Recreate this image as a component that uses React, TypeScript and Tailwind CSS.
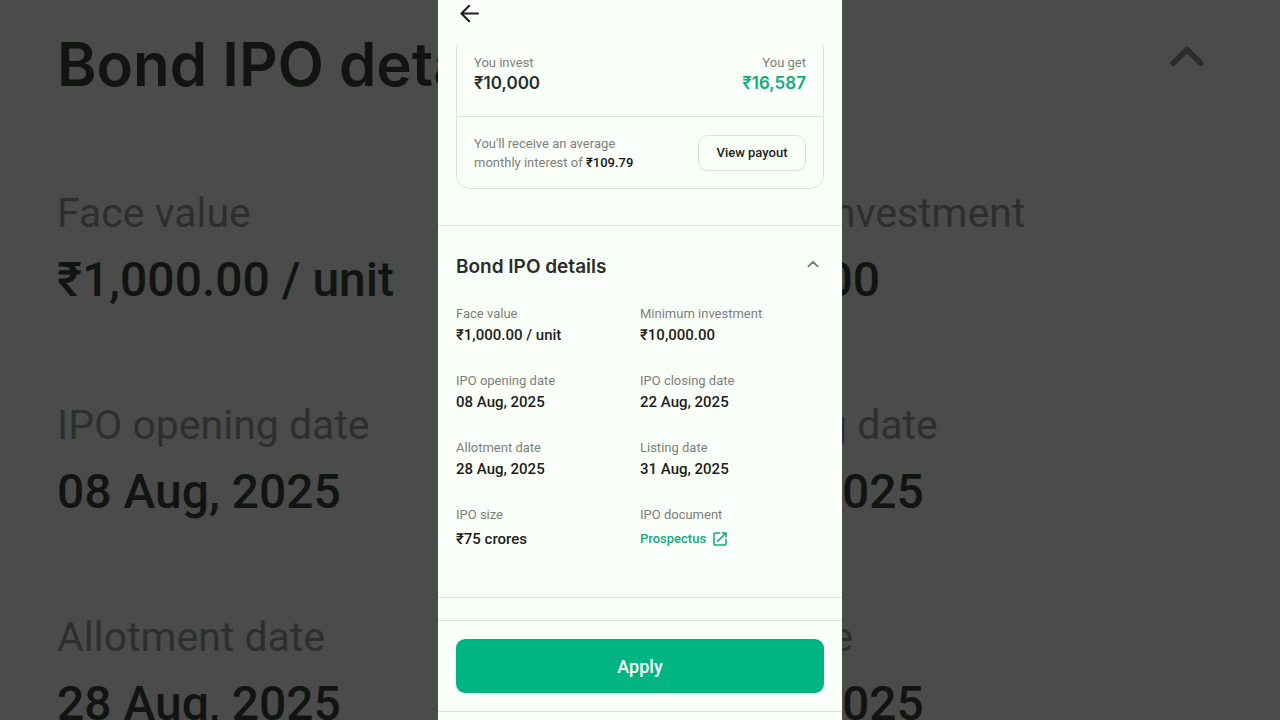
import { useState } from 'react';
import type { ReactNode } from 'react';
import { MdOpenInNew } from 'react-icons/md';

type Detail = {
  label: string;
  value: string;
  href?: string;
};

const DETAILS: Detail[] = [
  { label: 'Face value', value: '₹1,000.00 / unit' },
  { label: 'Minimum investment', value: '₹10,000.00' },
  { label: 'IPO opening date', value: '08 Aug, 2025' },
  { label: 'IPO closing date', value: '22 Aug, 2025' },
  { label: 'Allotment date', value: '28 Aug, 2025' },
  { label: 'Listing date', value: '31 Aug, 2025' },
  { label: 'IPO size', value: '₹75 crores' },
  { label: 'IPO document', value: 'Prospectus', href: '#prospectus' },
];

function ArrowLeft() {
  return (
    <svg viewBox="0 0 24 24" className="size-6" fill="none" stroke="currentColor" strokeWidth="2">
      <path d="M20 12.5H3.6M11.2 4.7 3.4 12.5l7.8 7.8" strokeLinecap="round" strokeLinejoin="round" />
    </svg>
  );
}

function ChevronUp({ className }: { className: string }) {
  return (
    <svg viewBox="0 0 12 8" className={className} fill="none" stroke="currentColor" strokeWidth="1.9">
      <path d="M1.4 6.4 6 1.8l4.6 4.6" strokeLinecap="round" strokeLinejoin="round" />
    </svg>
  );
}

// Dimmed, enlarged copy of the details section behind the phone column.
function Backdrop() {
  return (
    <div aria-hidden="true" className="absolute inset-0 overflow-hidden px-[57px] pt-6">
      <div className="mb-[79px] flex items-start justify-between pr-[18px] text-[#121412]">
        <p className="font-['Inter'] text-[60px] leading-[80px] font-semibold whitespace-nowrap">Bond IPO details</p>
        <ChevronUp className="mt-5 w-9 text-[#2b2d2b]" />
      </div>
      <div className="grid grid-cols-2 gap-y-[79px]">
        {DETAILS.slice(0, 6).map((d) => (
          <div key={d.label} className="whitespace-nowrap">
            <p className="text-[41px] leading-[60px] text-[#2d2f2d]">{d.label}</p>
            <p className="text-[48px] leading-[73px] font-medium text-[#121412]">{d.value}</p>
          </div>
        ))}
      </div>
    </div>
  );
}

function Amount({ label, children }: { label: string; children: ReactNode }) {
  return (
    <div>
      <p className="text-[13px] leading-5 text-[#7b7f7b]">{label}</p>
      {children}
    </div>
  );
}

function ReturnsCard() {
  return (
    <div className="mx-[18px] rounded-b-[14px] border-x border-b border-[#dfe3de]">
      <div className="flex justify-between px-[17px] pt-2 pb-[23px]">
        <Amount label="You invest">
          <p className="font-['Inter'] text-[17px] leading-5 font-semibold text-[#2a2d2a]">₹10,000</p>
        </Amount>
        <div className="text-right">
          <Amount label="You get">
            <p className="font-['Inter'] text-[17px] leading-5 font-semibold text-[#12aa7e]">₹16,587</p>
          </Amount>
        </div>
      </div>
      <div className="flex items-center justify-between border-t border-[#dfe3de] px-[17px] pt-[17px] pb-4">
        <p className="text-[13px] leading-[19px] text-[#7b7f7b]">
          You'll receive an average
          <br />
          monthly interest of <span className="font-medium text-[#151715]">₹109.79</span>
        </p>
        <button type="button" className="h-9 w-[108px] rounded-[10px] border border-[#dfe3de] text-[13px] font-medium">
          View payout
        </button>
      </div>
    </div>
  );
}

function DetailsSection() {
  const [open, setOpen] = useState(true);

  return (
    <section className="mt-9 border-t border-[#dfe3de] px-[18px] pt-[27px] pb-11">
      <button
        type="button"
        aria-expanded={open}
        onClick={() => setOpen(!open)}
        className="flex w-full items-start justify-between pr-[5px]"
      >
        <h2 className="font-['Inter'] text-[19px] leading-7 font-semibold text-[#2a2d2a]">Bond IPO details</h2>
        <ChevronUp className={open ? 'mt-[7px] w-3 text-[#7b7f7b]' : 'mt-[7px] w-3 rotate-180 text-[#7b7f7b]'} />
      </button>
      {open ? (
        <dl className="mt-[23px] grid grid-cols-2 gap-y-[25px]">
          {DETAILS.slice(0, 6).map((d) => (
            <div key={d.label}>
              <dt className="text-[13px] leading-5 text-[#7b7f7b]">{d.label}</dt>
              <dd className="text-[15px] leading-[22px] font-medium">{d.value}</dd>
            </div>
          ))}
          {DETAILS.slice(6).map((d) => (
            <div key={d.label}>
              <dt className="text-[13px] leading-5 text-[#7b7f7b]">{d.label}</dt>
              <dd className="text-[15px] leading-7 font-medium">
                {d.href ? (
                  <a href={d.href} className="flex items-center gap-[5px] text-[13px] leading-7 text-[#12aa7e]">
                    {d.value}
                    <MdOpenInNew className="size-[18px]" />
                  </a>
                ) : (
                  d.value
                )}
              </dd>
            </div>
          ))}
        </dl>
      ) : null}
    </section>
  );
}

export default function App() {
  return (
    <div className="relative min-h-screen overflow-hidden bg-[#4b4b4b] font-['Roboto',sans-serif]">
      <Backdrop />
      <main className="relative mx-auto flex min-h-screen w-full max-w-[404px] flex-col bg-[#fbfffa] text-[#1c1e1c]">
        <header className="h-[45px] px-5 pt-px">
          <button type="button" aria-label="Back" className="block">
            <ArrowLeft />
          </button>
        </header>
        <ReturnsCard />
        <DetailsSection />
        <div className="grow border-t border-[#dfe3de]" />
        <footer className="mb-2 border-y border-[#dfe3de] px-[18px] py-[18px]">
          <button type="button" className="h-[54px] w-full rounded-[9px] bg-[#00b583] text-[18px] font-medium text-white">
            Apply
          </button>
        </footer>
      </main>
    </div>
  );
}
